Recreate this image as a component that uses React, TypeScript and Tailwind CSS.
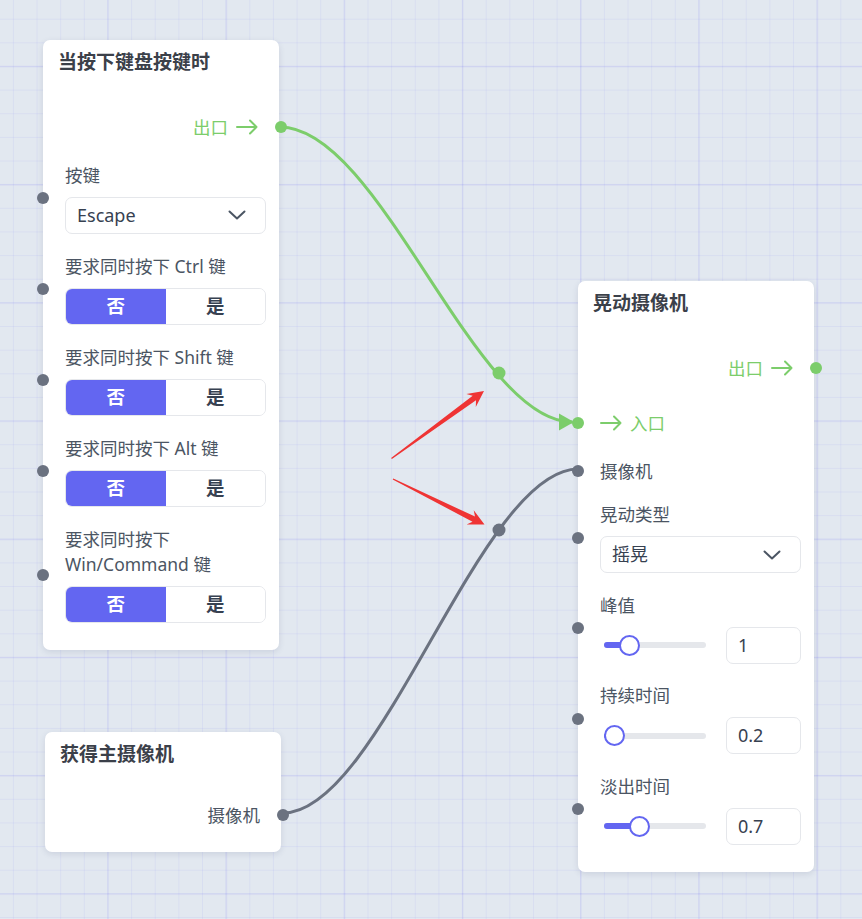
import React from "react"

const GREEN = "#7ccd6b"
const GRAY = "#6b7280"

function Handle({ side, color }: { side: "in" | "out"; color: string }) {
  return (
    <span
      className={
        side === "in"
          ? "absolute left-[-28px] top-1/2 -mt-[6px] h-[12px] w-[12px] rounded-full"
          : "absolute right-[-21px] top-1/2 -mt-[6px] h-[12px] w-[12px] rounded-full"
      }
      style={{ backgroundColor: color }}
    />
  )
}

function ArrowIcon({ color }: { color: string }) {
  return (
    <svg width="22" height="16" viewBox="0 0 22 16" fill="none" stroke={color} strokeWidth="2" strokeLinecap="round" strokeLinejoin="round">
      <path d="M1 8H20.5M14 1.5L20.5 8L14 14.5" />
    </svg>
  )
}

function Chevron() {
  return (
    <svg width="18" height="10" viewBox="0 0 18 10" fill="none" stroke="#4b5563" strokeWidth="2" strokeLinecap="round" strokeLinejoin="round">
      <path d="M1.5 1.5L9 8.5L16.5 1.5" />
    </svg>
  )
}

function Select({ value }: { value: string }) {
  return (
    <div className="flex h-[37px] items-center justify-between rounded-[7px] border border-[#e5e7eb] bg-white pl-[11px] pr-[19px] text-[18px] text-[#374151]">
      <span>{value}</span>
      <Chevron />
    </div>
  )
}

function Toggle() {
  return (
    <div className="flex h-[37px] overflow-hidden rounded-[7px] border border-[#e5e7eb] text-[18.5px] font-bold">
      <div className="flex flex-1 items-center justify-center bg-[#6366f1] text-white">否</div>
      <div className="flex flex-1 items-center justify-center bg-white text-[#374151]">是</div>
    </div>
  )
}

function Slider({ value, pos }: { value: string; pos: number }) {
  return (
    <div className="flex h-[37px] items-center justify-between">
      <div className="relative h-[37px] w-[110px]">
        <div className="absolute left-[4px] top-[15.5px] h-[6px] w-[102px] rounded-full bg-[#e5e7eb]" />
        <div className="absolute left-[4px] top-[15.5px] h-[6px] rounded-l-full bg-[#6366f1]" style={{ width: pos }} />
        <div
          className="absolute top-[8px] h-[21px] w-[21px] rounded-full border-2 border-[#6366f1] bg-white"
          style={{ left: 4 + pos - 10.5 }}
        />
      </div>
      <div className="flex h-[37px] w-[75px] items-center rounded-[7px] border border-[#e5e7eb] bg-white px-[11px] text-[18px] text-[#374151]">
        {value}
      </div>
    </div>
  )
}

function Field({ label, children }: { label: string; children: React.ReactNode }) {
  return (
    <div className="relative">
      <Handle side="in" color={GRAY} />
      <div className="text-[17.5px] leading-[25px] text-[#4b5563]">{label}</div>
      <div className="mt-[9px]">{children}</div>
    </div>
  )
}

function OutRow({ label, color }: { label: string; color: string }) {
  const exec = color === GREEN
  return (
    <div
      className="relative flex h-[25px] items-center justify-end gap-[8px] pr-[8px] text-[17.5px] leading-[25px]"
      style={{ color: exec ? GREEN : "#4b5563" }}
    >
      <span>{label}</span>
      {exec && <ArrowIcon color={GREEN} />}
      <Handle side="out" color={color} />
    </div>
  )
}

function Node({ className, title, children }: { className: string; title: string; children: React.ReactNode }) {
  return (
    <div className={"absolute w-[236px] rounded-[7px] bg-white shadow-[0_2px_6px_rgba(40,50,90,0.12)] " + className}>
      <div className="px-[15px] pt-[8px] text-[19px] font-bold leading-[28px] text-[#3b4049]">{title}</div>
      <div className="pl-[22px] pr-[13px]">{children}</div>
    </div>
  )
}

function redArrow(tx: number, ty: number, px: number, py: number) {
  const dx = px - tx
  const dy = py - ty
  const L = Math.hypot(dx, dy)
  const ux = dx / L
  const uy = dy / L
  const at = (d: number, w: number) => `${(tx + ux * d - uy * w).toFixed(1)},${(ty + uy * d + ux * w).toFixed(1)}`
  return [at(0, 0.6), at(L - 12, 2.8), at(L - 16, 8), at(L, 0), at(L - 16, -8), at(L - 12, -2.8), at(0, -0.6)].join(" ")
}

export default function App() {
  return (
    <div className="relative h-[919px] w-[862px] overflow-hidden bg-[#e2e8f0] font-['Noto_Sans','Noto_Sans_CJK_SC',sans-serif]">
      <svg className="absolute inset-0" width="862" height="919">
        <defs>
          <pattern id="minor" patternUnits="userSpaceOnUse" x="12.9" y="18.7" width="23.64" height="23.64">
            <rect x="0" y="0" width="1" height="23.64" fill="rgba(99,102,241,0.08)" />
            <rect x="0" y="0" width="23.64" height="1" fill="rgba(99,102,241,0.08)" />
          </pattern>
          <pattern id="major" patternUnits="userSpaceOnUse" x="107.2" y="65.7" width="118.2" height="118.2">
            <rect x="0" y="0" width="1.6" height="118.2" fill="rgba(99,102,241,0.09)" />
            <rect x="0" y="0" width="118.2" height="1.6" fill="rgba(99,102,241,0.09)" />
          </pattern>
        </defs>
        <rect width="862" height="919" fill="url(#minor)" />
        <rect width="862" height="919" fill="url(#major)" />

        {/* connections */}
        <path d="M280 127 C380 127 474 422 572 422" fill="none" stroke={GREEN} strokeWidth="3" />
        <polygon points="559,413.5 574,422 559,430.5" fill={GREEN} />
        <circle cx="499" cy="373" r="6.5" fill={GREEN} />
        <path d="M283 813 C381 813 480 469 578 469" fill="none" stroke={GRAY} strokeWidth="3" />
        <circle cx="499" cy="530" r="6.5" fill={GRAY} />

        {/* annotation arrows */}
        <polygon points={redArrow(391.5, 458.5, 484, 391)} fill="#ef3434" />
        <polygon points={redArrow(393, 479, 484.5, 524.5)} fill="#ef3434" />
      </svg>

      <Node className="left-[43px] top-[40px]" title="当按下键盘按键时">
        <div className="mt-[38.5px]">
          <OutRow label="出口" color={GREEN} />
        </div>
        <div className="mt-[23px] flex flex-col gap-[20px] pb-[27.5px]">
          <Field label="按键">
            <Select value="Escape" />
          </Field>
          <Field label="要求同时按下 Ctrl 键">
            <Toggle />
          </Field>
          <Field label="要求同时按下 Shift 键">
            <Toggle />
          </Field>
          <Field label="要求同时按下 Alt 键">
            <Toggle />
          </Field>
          <Field label="要求同时按下 Win/Command 键">
            <Toggle />
          </Field>
        </div>
      </Node>

      <Node className="left-[45px] top-[732px]" title="获得主摄像机">
        <div className="mt-[34.5px] pb-[24.5px]">
          <OutRow label="摄像机" color={GRAY} />
        </div>
      </Node>

      <Node className="left-[578px] top-[281px]" title="晃动摄像机">
        <div className="mt-[38.5px]">
          <OutRow label="出口" color={GREEN} />
        </div>
        <div className="relative mt-[30px] flex h-[25px] items-center gap-[8px] text-[17.5px] leading-[25px] text-[#7ccd6b]">
          <Handle side="in" color={GREEN} />
          <ArrowIcon color={GREEN} />
          <span>入口</span>
        </div>
        <div className="relative mt-[23px] h-[25px] text-[17.5px] leading-[25px] text-[#4b5563]">
          <Handle side="in" color={GRAY} />
          摄像机
        </div>
        <div className="mt-[18.5px] flex flex-col gap-[19.5px] pb-[27px]">
          <Field label="晃动类型">
            <Select value="摇晃" />
          </Field>
          <Field label="峰值">
            <Slider value="1" pos={25} />
          </Field>
          <Field label="持续时间">
            <Slider value="0.2" pos={10.5} />
          </Field>
          <Field label="淡出时间">
            <Slider value="0.7" pos={35} />
          </Field>
        </div>
      </Node>
    </div>
  )
}
